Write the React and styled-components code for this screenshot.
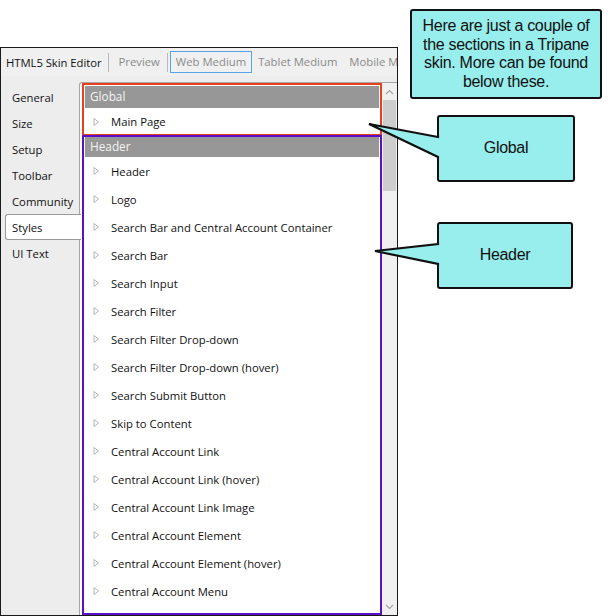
import React from "react";
import styled, { createGlobalStyle } from "styled-components";

const GlobalStyle = createGlobalStyle`
    html, body {
        margin: 0;
        padding: 0;
        background: #ffffff;
        overflow: hidden;
    }
    * {
        box-sizing: border-box;
    }
`;

const tabs = [
    { label: "Web Medium", active: true },
    { label: "Tablet Medium" },
    { label: "Mobile Medium" },
];

const navItems = ["General", "Size", "Setup", "Toolbar", "Community", "Styles", "UI Text"];

const groups = [
    { title: "Global", items: ["Main Page"] },
    {
        title: "Header",
        items: [
            "Header",
            "Logo",
            "Search Bar and Central Account Container",
            "Search Bar",
            "Search Input",
            "Search Filter",
            "Search Filter Drop-down",
            "Search Filter Drop-down (hover)",
            "Search Submit Button",
            "Skip to Content",
            "Central Account Link",
            "Central Account Link (hover)",
            "Central Account Link Image",
            "Central Account Element",
            "Central Account Element (hover)",
            "Central Account Menu",
            "Central Account Menu Item",
        ],
    },
];

const Expander = () => (
    <svg width="7" height="10" viewBox="0 0 7 10">
        <polygon points="1,1.5 5.5,5 1,8.5" fill="#fff" stroke="#b4b4b4" strokeWidth="1" />
    </svg>
);

const Chevron = ({ down }) => (
    <svg width="9" height="6" viewBox="0 0 9 6">
        <polyline
            points={down ? "1,1 4.5,4.5 8,1" : "1,5 4.5,1.5 8,5"}
            fill="none"
            stroke="#a6a6a6"
            strokeWidth="1.2"
        />
    </svg>
);

// speech-bubble tail, drawn over the box's left border so they merge
const CalloutTail = ({ tip, base }) => {
    const [tx, ty] = tip;
    const [bx, by1, by2] = base;
    const left = Math.min(tx, bx) - 2;
    const top = Math.min(ty, by1) - 2;
    const w = bx - left + 5;
    const h = Math.max(ty, by2) - top + 3;
    return (
        <Tail width={w} height={h} viewBox={`${left} ${top} ${w} ${h}`} style={{ left, top }}>
            <polygon
                points={`${tx},${ty} ${bx},${by1} ${bx + 3},${by1} ${bx + 3},${by2} ${bx},${by2}`}
                fill="#97eeec"
            />
            <polyline
                points={`${bx},${by1 - 1.5} ${bx},${by1} ${tx},${ty} ${bx},${by2} ${bx},${by2 + 1.5}`}
                fill="none"
                stroke="#111"
                strokeWidth="2.2"
            />
        </Tail>
    );
};

const Callout = ({ box, tail, children }) => (
    <>
        <CalloutBox style={box}>{children}</CalloutBox>
        {tail && <CalloutTail tip={tail.tip} base={tail.base} />}
    </>
);

const App = () => {
    return (
        <Page>
            <GlobalStyle />
            <Window>
                <TabStrip>
                    <Title>HTML5 Skin Editor</Title>
                    <Divider $gap={3} />
                    <Tab>Preview</Tab>
                    <Divider $before={1} $gap={2} />
                    {tabs.map((t) => (
                        <Tab key={t.label} $active={t.active}>
                            {t.label}
                        </Tab>
                    ))}
                </TabStrip>
                <Body>
                    <Nav>
                        {navItems.map((n) => (
                            <NavItem key={n} $selected={n === "Styles"}>
                                {n}
                            </NavItem>
                        ))}
                    </Nav>
                    <Panel>
                        <List>
                            {groups.map((g) => (
                                <Group key={g.title}>
                                    <GroupBar>{g.title}</GroupBar>
                                    {g.items.map((item) => (
                                        <Row key={item}>
                                            <Expander />
                                            <span>{item}</span>
                                        </Row>
                                    ))}
                                </Group>
                            ))}
                        </List>
                        <Scrollbar>
                            <ScrollArrow>
                                <Chevron />
                            </ScrollArrow>
                            <Thumb />
                            <Track />
                            <ScrollArrow>
                                <Chevron down />
                            </ScrollArrow>
                        </Scrollbar>
                    </Panel>
                </Body>
            </Window>

            <Highlight $color="#e8401c" style={{ left: 82, top: 83, width: 300, height: 53 }} />
            <Highlight $color="#5a0fc8" style={{ left: 82, top: 135, width: 300, height: 480 }} />

            <Callout box={{ left: 410, top: 9, width: 192, height: 90, padding: "5px 6px" }}>
                Here are just a couple of the sections in a Tripane skin. More can be found below these.
            </Callout>
            <Callout
                box={{ left: 437, top: 115, width: 138, height: 67 }}
                tail={{ tip: [369, 124], base: [438, 137, 157] }}
            >
                Global
            </Callout>
            <Callout
                box={{ left: 437, top: 222, width: 136, height: 67 }}
                tail={{ tip: [375, 251], base: [438, 244, 264] }}
            >
                Header
            </Callout>
        </Page>
    );
};

const Page = styled.div`
    position: relative;
    width: 610px;
    height: 616px;
    padding-top: 47px;
    overflow: hidden;
    font-family: "Open Sans", "Noto Sans", sans-serif;
`;

const Window = styled.div`
    width: 398px;
    height: 569px;
    border: 1px solid #1a1a1a;
    background: #ededed;
    display: flex;
    flex-direction: column;
    overflow: hidden;
`;

const TabStrip = styled.div`
    height: 28px;
    display: flex;
    align-items: center;
    padding-left: 5px;
    white-space: nowrap;
    font-size: 11.3px;
    background: #f0f0f0;
`;

const Title = styled.span`
    color: #111;
    letter-spacing: -0.05px;
    margin-right: 7px;
`;

const Divider = styled.span`
    flex-shrink: 0;
    width: 1px;
    height: 19px;
    background: #b9b9b9;
    margin-left: ${({ $before = 0 }) => $before}px;
    margin-right: ${({ $gap = 0 }) => $gap}px;
`;

const Tab = styled.span`
    color: #8a8a8a;
    padding: 2px 5px 3px;
    border: 1px solid ${({ $active }) => ($active ? "#5aa2e6" : "transparent")};
`;

const Body = styled.div`
    flex: 1;
    display: flex;
    padding-top: 6px;
    min-height: 0;
`;

const Nav = styled.div`
    width: 78px;
    padding-top: 2px;
    display: flex;
    flex-direction: column;
    flex-shrink: 0;
`;

const NavItem = styled.div`
    position: relative;
    z-index: 1;
    height: 26px;
    line-height: 25px;
    margin-left: 4px;
    margin-right: ${({ $selected }) => ($selected ? "-2px" : "0")};
    padding-left: 6px;
    font-size: 11.3px;
    color: #111;
    background: ${({ $selected }) => ($selected ? "#ffffff" : "transparent")};
    border: 1px solid ${({ $selected }) => ($selected ? "#9a9a9a" : "transparent")};
    border-right: none;
    border-radius: 3px 0 0 3px;
`;

const Panel = styled.div`
    flex: 1;
    display: flex;
    min-width: 0;
    background: #ffffff;
    border-top: 1px solid #a5a5a5;
    border-left: 1px solid #a5a5a5;
    border-top-left-radius: 3px;
`;

const List = styled.div`
    flex: 1;
    overflow: hidden;
    padding: 3px 3px 0 5px;
`;

const Group = styled.div`
    display: flex;
    flex-direction: column;
`;

const GroupBar = styled.div`
    height: 21.5px;
    line-height: 21px;
    background: #979797;
    color: #f4f4f4;
    font-size: 11.8px;
    padding-left: 5px;
`;

const Row = styled.div`
    height: 28px;
    display: flex;
    align-items: center;
    gap: 11px;
    padding-left: 8px;
    font-size: 11.3px;
    color: #111;
    white-space: nowrap;
`;

const Scrollbar = styled.div`
    width: 15px;
    flex-shrink: 0;
    display: flex;
    flex-direction: column;
    background: #f0f0f0;
`;

const ScrollArrow = styled.div`
    height: 17px;
    display: flex;
    align-items: center;
    justify-content: center;
`;

const Thumb = styled.div`
    height: 91px;
    margin: 0 1px;
    background: #cdcdcd;
`;

const Track = styled.div`
    flex: 1;
`;

const Highlight = styled.div`
    position: absolute;
    border: 2px solid ${({ $color }) => $color};
    pointer-events: none;
`;

const CalloutBox = styled.div`
    position: absolute;
    display: flex;
    align-items: center;
    justify-content: center;
    text-align: center;
    background: #97eeec;
    border: 2px solid #111;
    border-radius: 3px;
    font-family: "Liberation Sans", Arial, sans-serif;
    font-size: 16px;
    line-height: 18.5px;
    letter-spacing: -0.3px;
    color: #111;
`;

const Tail = styled.svg`
    position: absolute;
    overflow: visible;
`;

export default App;
